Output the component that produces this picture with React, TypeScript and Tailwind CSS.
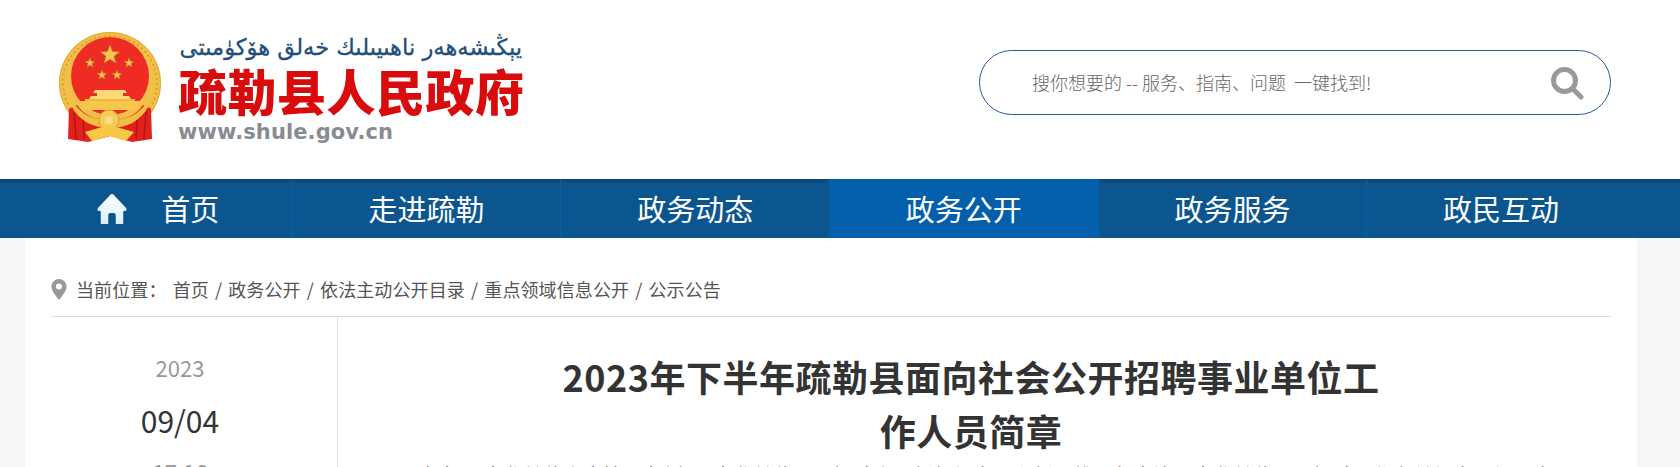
import React from 'react'

const CJK = "font-['Noto_Sans_CJK_SC','Liberation_Sans',sans-serif]"

const navItems = ['走进疏勒', '政务动态', '政务公开', '政务服务', '政民互动']

const Star = ({ cx, cy, r }: { cx: number; cy: number; r: number }) => {
  const pts = Array.from({ length: 10 }, (_, i) => {
    const a = -Math.PI / 2 + (i * Math.PI) / 5
    const d = i % 2 === 0 ? r : r * 0.42
    return `${(cx + d * Math.cos(a)).toFixed(1)},${(cy + d * Math.sin(a)).toFixed(1)}`
  }).join(' ')
  return <polygon points={pts} fill="#f4c64a" stroke="#b9862a" strokeWidth="0.5" />
}

const Emblem = () => (
  <svg width="106" height="112" viewBox="0 0 106 112" className="shrink-0">
    {/* wreath */}
    <circle cx="53" cy="52" r="51" fill="#f2c04a" />
    <circle cx="53" cy="52" r="47" fill="none" stroke="#dd9f2a" strokeWidth="2" strokeDasharray="2 3" />
    <circle cx="53" cy="52" r="50.5" fill="none" stroke="#e2a935" strokeWidth="1" />
    {/* red field */}
    <circle cx="53" cy="45" r="39" fill="#ee2c24" />
    <Star cx={53} cy={24} r={10} />
    <Star cx={33} cy={32} r={5} />
    <Star cx={72} cy={32} r={5} />
    <Star cx={45} cy={44} r={5} />
    <Star cx={60} cy={44} r={5} />
    {/* gate */}
    <path d="M38 59h30l2 3h-4v3h6l2 3H32l2-3h6v-3h-4z" fill="#fbd978" />
    <path d="M28 68h50v2H28z" fill="#f0b93c" />
    <path d="M21 70h62l-4 9H25z" fill="#f7c74c" />
    {/* curtains */}
    <path d="M12 78l8-4c6 9 16 15 33 15s27-6 33-15l8 4 1 30-20 3-22-6-22 6-20-3z" fill="#e2211c" />
    <path d="M17 81l2 27M26 86l1 22M80 86l-1 22M89 81l-2 27" stroke="#b8140f" strokeWidth="1.5" />
    {/* ribbon */}
    <path d="M17 72c7 11 18 17 36 17s29-6 36-17l2 4c-7 13-20 21-38 21S22 89 15 76z" fill="#f2bf45" />
    {/* wheel */}
    <circle cx="52" cy="89" r="10" fill="#f6cb58" stroke="#d89f2e" strokeWidth="1" />
    <circle cx="52" cy="89" r="4" fill="#fbdc85" />
    <path d="M28 101l24-7 25 7-8 9-17-5-17 5z" fill="#f6c843" />
  </svg>
)

const App = () => {
  return (
    <div className={`w-[1680px] h-[467px] overflow-hidden bg-[#f6f6f6] ${CJK}`}>
      <header className="h-[179px] bg-white flex items-start justify-between pl-[57px] pr-[69px]">
        <div className="flex items-start gap-[15px] pt-[31px]">
          <Emblem />
          <div className="w-[344px]">
            <div
              dir="rtl"
              className="h-[29px] text-[22.6px] leading-[32px] text-[#1f4e79] font-['DejaVu_Sans',sans-serif] whitespace-nowrap [-webkit-text-stroke:0.3px_#1f4e79]"
            >
              يېڭىشەھەر ناھىيىلىك خەلق ھۆكۈمىتى
            </div>
            <div className="text-[49px] leading-[60px] font-black text-[#d80c0c] whitespace-nowrap tracking-[0.5px]">
              疏勒县人民政府
            </div>
            <div className="mt-[1px] text-[21px] leading-[22px] font-bold text-[#868c92] tracking-[0.1px] font-['DejaVu_Sans',sans-serif]">
              www.shule.gov.cn
            </div>
          </div>
        </div>
        <div className="mt-[50px] w-[632px] h-[65px] rounded-[33px] border border-[#1f5a9e] flex items-center justify-between pl-[52px] pr-[26px]">
          <span className="text-[18px] font-light text-[#666] whitespace-pre">搜你想要的 -- 服务、指南、问题  一键找到!</span>
          <svg width="34" height="34" viewBox="0 0 34 34" fill="none" stroke="#999" strokeLinecap="round">
            <circle cx="14.5" cy="14.5" r="11" strokeWidth="5" />
            <path d="M23 23l8 8" strokeWidth="5" />
          </svg>
        </div>
      </header>

      <nav className="h-[59px] bg-[linear-gradient(#123f6c,#0c568f_5px,#0c568f)] pl-[23px]">
        <ul className="flex w-[1612px] h-full text-[29px] text-white">
          <li className="w-[268.67px] flex items-center justify-center gap-[34px] pl-[2px]">
            <svg width="30" height="30" viewBox="0 0 32 30" preserveAspectRatio="none">
              <defs>
                <linearGradient id="homeFill" x1="0" y1="0" x2="0" y2="1">
                  <stop offset="0" stopColor="#ffffff" />
                  <stop offset="1" stopColor="#d8effa" />
                </linearGradient>
              </defs>
              <path
                d="M16 0c.8 0 1.400.4 2 1l13 13c1 1 .6 3-1 3h-2v12c0 .6-.4 1-1 1h-7v-9c0-1-.8-2-2-2h-4c-1.200 0-2 1-2 2v9H5c-.6 0-1-.4-1-1V17H2c-1.600 0-2-2-1-3L14 1c.6-.6 1.200-1 2-1z"
                fill="url(#homeFill)"
              />
            </svg>
            <span>首页</span>
          </li>
          {navItems.map((n) => (
            <li
              key={n}
              className={`w-[268.67px] flex items-center justify-center border-l border-[#0a60ab] ${
                n === '政务公开' ? 'bg-[#045fab]' : ''
              }`}
            >
              {n}
            </li>
          ))}
        </ul>
      </nav>

      <main className="ml-[25px] w-[1612px] h-[300px] bg-white px-[26px]">
        <div className="h-[79px] border-b border-[#ddd] flex items-end pb-[14px] text-[18px] leading-[26px] text-[#555] tracking-[0.1px] [word-spacing:2px]">
          <svg width="16" height="21" viewBox="0 0 16 21" className="mb-[2px] mr-[9px]">
            <path
              fillRule="evenodd"
              d="M8 0a7.6 7.6 0 0 1 7.600 7.600C15.600 12.500 8 21 8 21S.4 12.500.4 7.600A7.600 7.600 0 0 1 8 0zm0 4.600a3 3 0 1 0 0 6 3 3 0 0 0 0-6z"
              fill="#999"
            />
          </svg>
          <span className="whitespace-pre">当前位置： 首页 / 政务公开 / 依法主动公开目录 / 重点领域信息公开 / 公示公告</span>
        </div>
        <div className="flex h-[200px]">
          <aside className="w-[287px] border-r border-[#ddd] flex flex-col items-center pt-[36px] pr-[28px]">
            <div className="text-[22px] leading-[28px] text-[#999]">2023</div>
            <div className="mt-[17px] text-[30px] leading-[44px] text-[#333]">09/04</div>
            <div className="mt-[15px] text-[22px] leading-[28px] text-[#999]">17:16</div>
          </aside>
          <article className="flex-1 pl-[85px] pt-[32px]">
            <h1 className="ml-[123px] w-[850px] text-[36px] leading-[54px] font-bold tracking-[0.5px] text-[#333] text-center">
              2023年下半年疏勒县面向社会公开招聘事业单位工作人员简章
            </h1>
            <p className="mt-[5px] w-[1125px] text-[20px] leading-[28px] text-[#333] whitespace-nowrap overflow-hidden">
              根据《事业单位人事管理条例》《事业单位公开招聘人员暂行规定》和新疆维吾尔自治区事业单位公开招聘工作有关规定，经研究决定
            </p>
          </article>
        </div>
      </main>
    </div>
  )
}

export default App
